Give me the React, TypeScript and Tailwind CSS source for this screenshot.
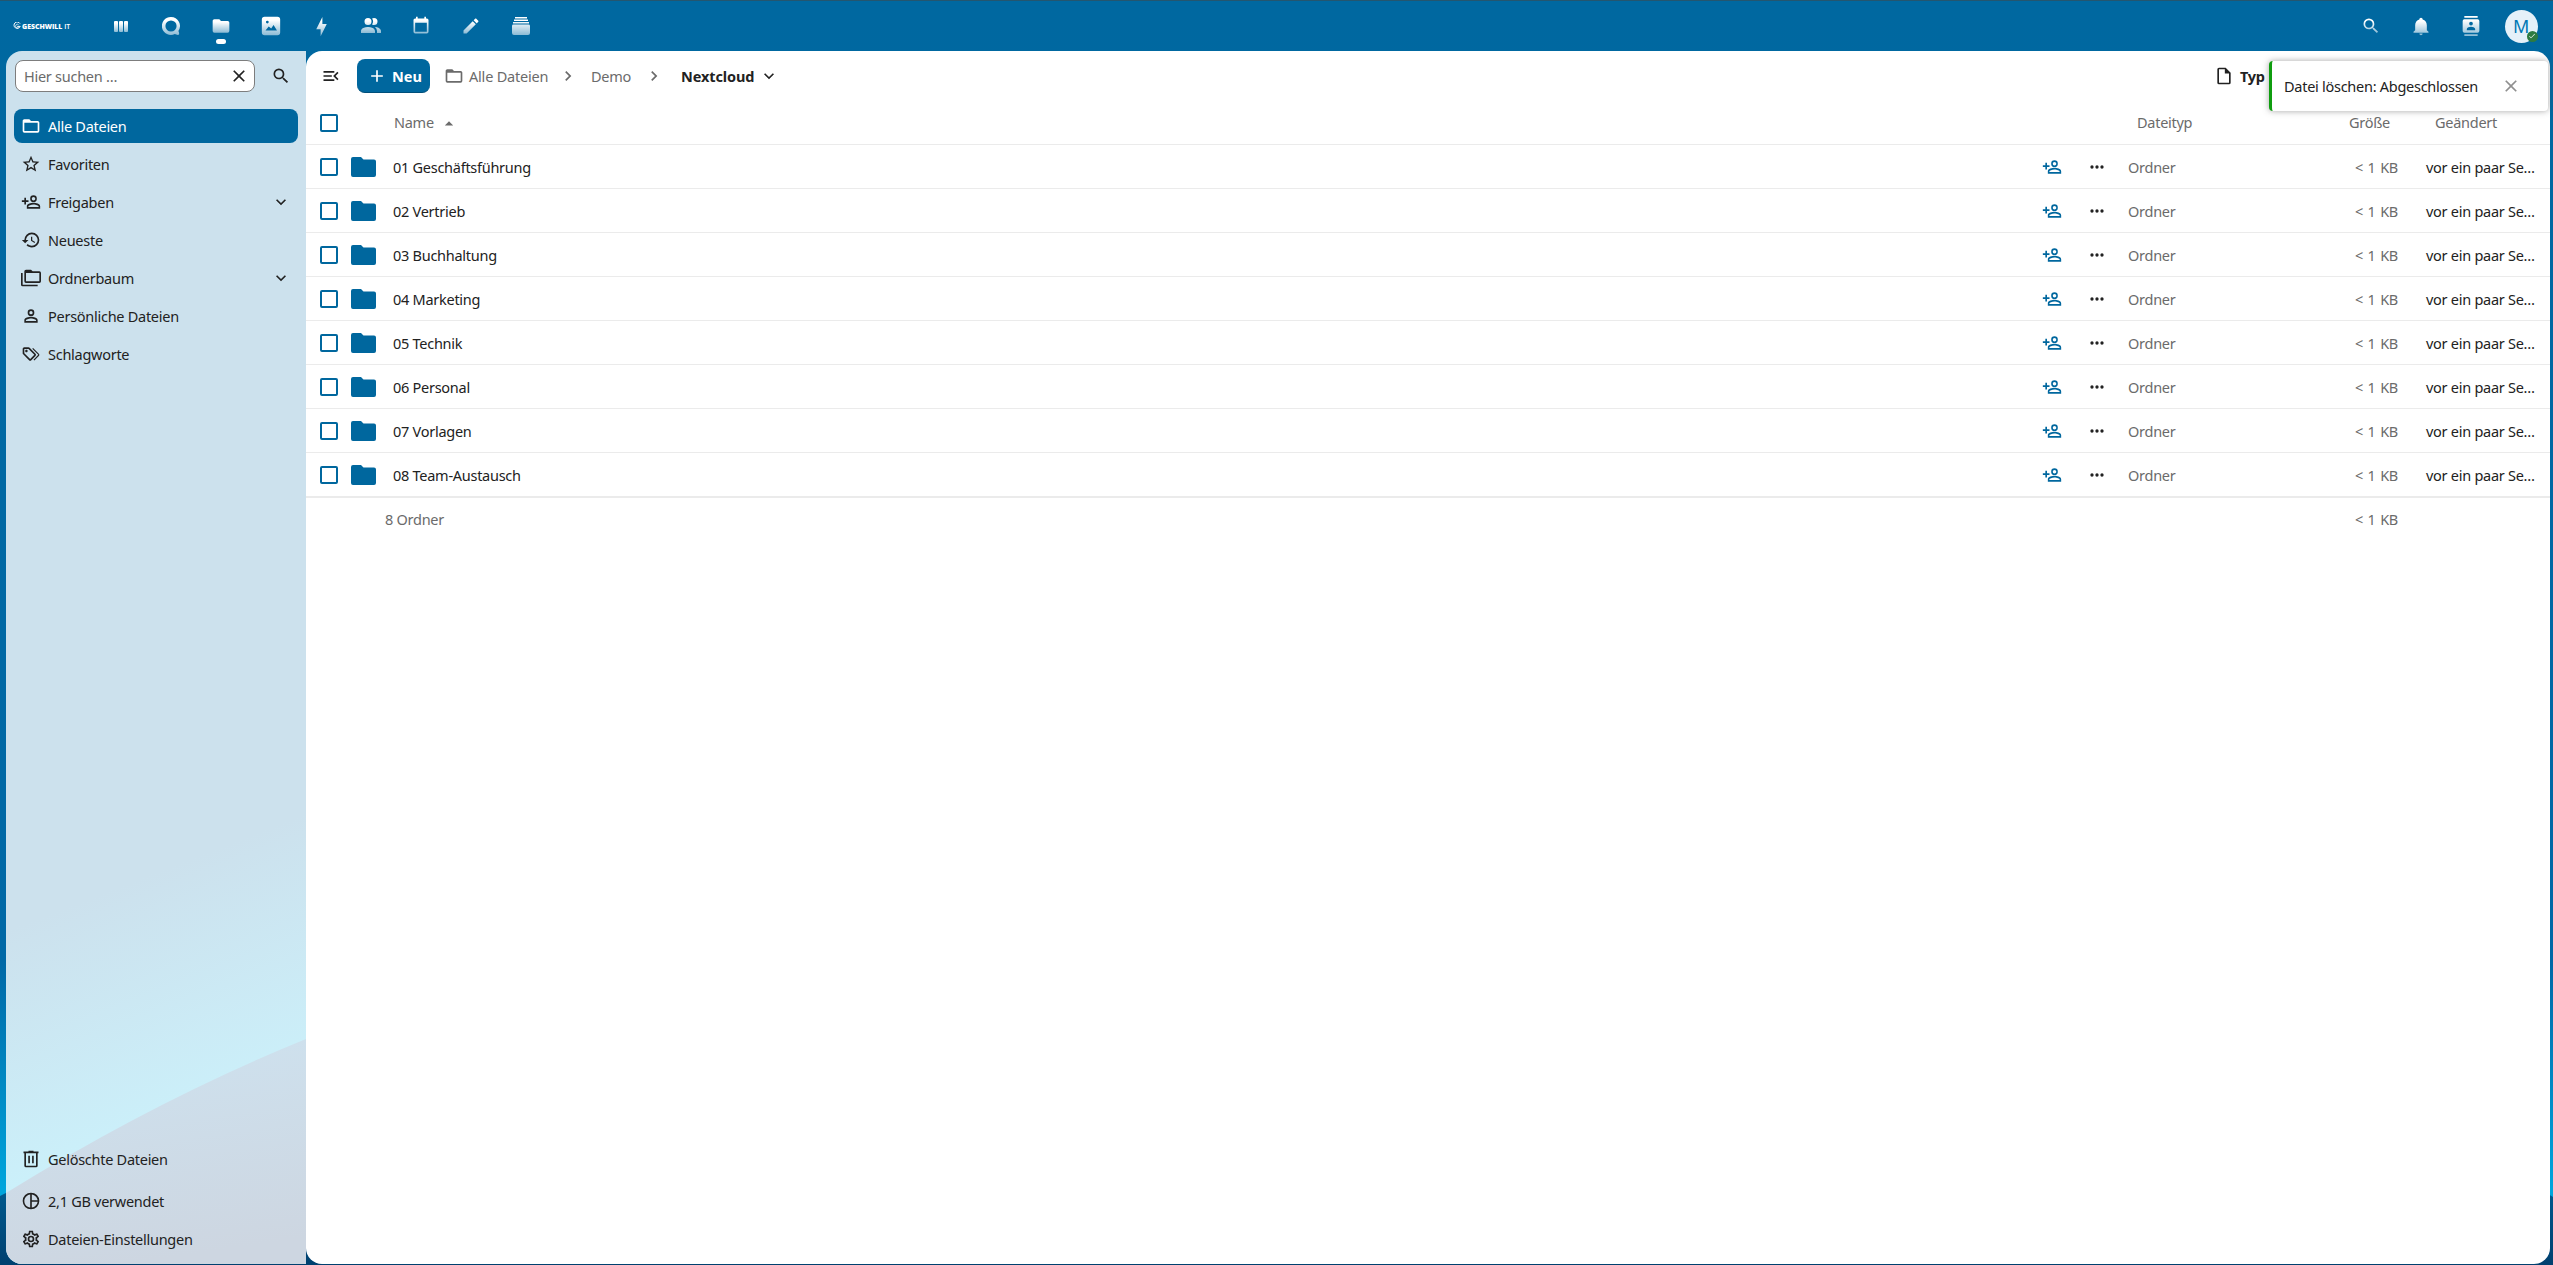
import React from "react";

const P = {
  folder: "M10,4H4C2.89,4 2,4.89 2,6V18A2,2 0 0,0 4,20H20A2,2 0 0,0 22,18V8C22,6.89 21.1,6 20,6H12L10,4Z",
  image: "M5,2H19A3,3 0 0,1 22,5V19A3,3 0 0,1 19,22H5A3,3 0 0,1 2,19V5A3,3 0 0,1 5,2M6,17H18.5L14.8,11L12.2,14.8L9.5,12.5L6,17M8,6.2A1.5,1.5 0 0,0 8,9.2A1.5,1.5 0 0,0 8,6.2Z",
  bolt: "M11 15H6L13 1V9H18L11 23V15Z",
  people: "M16 17V19H2V17S2 13 9 13 16 17 16 17M12.5 7.5A3.5 3.5 0 1 0 9 11A3.5 3.5 0 0 0 12.5 7.5M15.94 13A5.32 5.32 0 0 1 18 17V19H22V17S22 13.37 15.94 13M15 4A3.39 3.39 0 0 0 13.07 4.59A5 5 0 0 1 13.07 10.41A3.39 3.39 0 0 0 15 11A3.5 3.5 0 0 0 15 4Z",
  calendar: "M19,19H5V8H19M16,1V3H8V1H6V3H5C3.89,3 3,3.89 3,5V19A2,2 0 0,0 5,21H19A2,2 0 0,0 21,19V5C21,3.89 20.1,3 19,3H18V1",
  pencil: "M20.71,7.04C21.1,6.65 21.1,6 20.71,5.63L18.37,3.29C18,2.9 17.35,2.9 16.96,3.29L15.12,5.12L18.87,8.87M3,17.25V21H6.75L17.81,9.93L14.06,6.18L3,17.25Z",
  magnify: "M9.5,3A6.5,6.5 0 0,1 16,9.5C16,11.11 15.41,12.59 14.44,13.73L14.71,14H15.5L20.5,19L19,20.5L14,15.5V14.71L13.73,14.44C12.59,15.41 11.11,16 9.5,16A6.5,6.5 0 0,1 3,9.5A6.5,6.5 0 0,1 9.5,3M9.5,5C7,5 5,7 5,9.5C5,12 7,14 9.5,14C12,14 14,12 14,9.5C14,7 12,5 9.5,5Z",
  bell: "M21,19V20H3V19L5,17V11C5,7.9 7.03,5.17 10,4.29C10,4.19 10,4.1 10,4A2,2 0 0,1 12,2A2,2 0 0,1 14,4C14,4.1 14,4.19 14,4.29C16.97,5.17 19,7.9 19,11V17L21,19M14,21A2,2 0 0,1 12,23A2,2 0 0,1 10,21",
  contacts: "M20,0H4V2H20V0M4,24H20V22H4V24M20,4H4A2,2 0 0,0 2,6V18A2,2 0 0,0 4,20H20A2,2 0 0,0 22,18V6A2,2 0 0,0 20,4M12,6.75A2.25,2.25 0 0,1 14.25,9A2.25,2.25 0 0,1 12,11.25A2.25,2.25 0 0,1 9.75,9A2.25,2.25 0 0,1 12,6.75M17,17H7V15.5C7,13.83 10.33,13 12,13C13.67,13 17,13.83 17,15.5V17Z",
  close: "M19,6.41L17.59,5L12,10.59L6.41,5L5,6.41L10.59,12L5,17.59L6.41,19L12,13.41L17.59,19L19,17.59L13.41,12L19,6.41Z",
  menuOpen: "M21,15.61L19.59,17L14.58,12L19.59,7L21,8.39L17.44,12L21,15.61M3,6H16V8H3V6M3,13V11H13V13H3M3,18V16H16V18H3Z",
  plus: "M19,13H13V19H11V13H5V11H11V5H13V11H19V13Z",
  folderOutline: "M20,18H4V8H20M20,6H12L10,4H4C2.89,4 2,4.89 2,6V18A2,2 0 0,0 4,20H20A2,2 0 0,0 22,18V8C22,6.89 21.1,6 20,6Z",
  chevronRight: "M8.59,16.58L13.17,12L8.59,7.41L10,6L16,12L10,18L8.59,16.58Z",
  chevronDown: "M7.41,8.58L12,13.17L16.59,8.58L18,10L12,16L6,10L7.41,8.58Z",
  menuUp: "M7,15L12,10L17,15H7Z",
  star: "M12,15.39L8.24,17.66L9.23,13.38L5.91,10.5L10.29,10.13L12,6.09L13.71,10.13L18.09,10.5L14.77,13.38L15.76,17.66M22,9.24L14.81,8.63L12,2L9.19,8.63L2,9.24L7.45,13.97L5.82,21L12,17.27L18.18,21L16.54,13.97L22,9.24Z",
  accountPlus: "M15,4A4,4 0 0,0 11,8A4,4 0 0,0 15,12A4,4 0 0,0 19,8A4,4 0 0,0 15,4M15,5.9C16.16,5.9 17.1,6.84 17.1,8C17.1,9.16 16.16,10.1 15,10.1A2.1,2.1 0 0,1 12.9,8A2.1,2.1 0 0,1 15,5.9M4,7V10H1V12H4V15H6V12H9V10H6V7H4M15,13C12.33,13 7,14.33 7,17V20H23V17C23,14.33 17.67,13 15,13M15,14.9C17.97,14.9 21.1,16.36 21.1,17V18.1H8.9V17C8.9,16.36 12,14.9 15,14.9Z",
  history: "M13.5,8H12V13L16.28,15.54L17,14.33L13.5,12.25V8M13,3A9,9 0 0,0 4,12H1L4.96,16.03L9,12H6A7,7 0 0,1 13,5A7,7 0 0,1 20,12A7,7 0 0,1 13,19C11.07,19 9.32,18.21 8.06,16.94L6.64,18.36C8.27,20 10.5,21 13,21A9,9 0 0,0 22,12A9,9 0 0,0 13,3",
  folders: "M22,4H14L12,2H6A2,2 0 0,0 4,4V16A2,2 0 0,0 6,18H22A2,2 0 0,0 24,16V6A2,2 0 0,0 22,4M22,16H6V6H22M2,6H0V20A2,2 0 0,0 2,22H20V20H2V6Z",
  account: "M12,4A4,4 0 0,1 16,8A4,4 0 0,1 12,12A4,4 0 0,1 8,8A4,4 0 0,1 12,4M12,6A2,2 0 0,0 10,8A2,2 0 0,0 12,10A2,2 0 0,0 14,8A2,2 0 0,0 12,6M12,13C14.67,13 20,14.33 20,17V20H4V17C4,14.33 9.33,13 12,13M12,14.9C9.03,14.9 5.9,16.36 5.9,17V18.1H18.1V17C18.1,16.36 14.97,14.9 12,14.9Z",
  tags: "M6.5 10C7.3 10 8 9.3 8 8.5S7.3 7 6.5 7 5 7.7 5 8.5 5.7 10 6.5 10M9 6L16 13L11 18L4 11V6H9M9 4H4C2.9 4 2 4.9 2 6V11C2 11.6 2.2 12.1 2.6 12.4L9.6 19.4C9.9 19.8 10.4 20 11 20S12.1 19.8 12.4 19.4L17.4 14.4C17.8 14 18 13.5 18 13C18 12.4 17.8 11.9 17.4 11.6L10.4 4.6C10.1 4.2 9.6 4 9 4M13.5 5.7L14.5 4.7L21.4 11.6C21.8 12 22 12.5 22 13S21.8 14.1 21.4 14.4L16 19.8L15 18.8L20.7 13L13.5 5.7Z",
  trash: "M9,2V3H3V5H4V20A2,2 0 0,0 6,22H18A2,2 0 0,0 20,20V5H21V3H15V2H9M6,5H18V20H6V5M8.7,8V17H10.7V8H8.7M13.3,8V17H15.3V8H13.3Z",
  pie: "M12,2A10,10 0 0,0 2,12A10,10 0 0,0 12,22A10,10 0 0,0 22,12A10,10 0 0,0 12,2M13,4.07C16.61,4.53 19.5,7.39 19.93,11H13V4.07M4,12C4,8 7,4.57 11,4.07V19.93C7,19.43 4,16 4,12M13,19.93V13H19.93C19.5,16.61 16.64,19.47 13,19.93Z",
  cog: "M12,8A4,4 0 0,1 16,12A4,4 0 0,1 12,16A4,4 0 0,1 8,12A4,4 0 0,1 12,8M12,10A2,2 0 0,0 10,12A2,2 0 0,0 12,14A2,2 0 0,0 14,12A2,2 0 0,0 12,10M10,22C9.75,22 9.54,21.82 9.5,21.58L9.13,18.93C8.5,18.68 7.96,18.34 7.44,17.94L4.95,18.95C4.73,19.03 4.46,18.95 4.34,18.73L2.34,15.27C2.21,15.05 2.27,14.78 2.46,14.63L4.57,12.97L4.5,12L4.57,11L2.46,9.37C2.27,9.22 2.21,8.95 2.34,8.73L4.34,5.27C4.46,5.05 4.73,4.96 4.95,5.05L7.44,6.05C7.96,5.66 8.5,5.32 9.13,5.07L9.5,2.42C9.54,2.18 9.75,2 10,2H14C14.25,2 14.46,2.18 14.5,2.42L14.87,5.07C15.5,5.32 16.04,5.66 16.56,6.05L19.05,5.05C19.27,4.96 19.54,5.05 19.66,5.27L21.66,8.73C21.79,8.95 21.73,9.22 21.54,9.37L19.43,11L19.5,12L19.43,13L21.54,14.63C21.73,14.78 21.79,15.05 21.66,15.27L19.66,18.73C19.54,18.95 19.27,19.04 19.05,18.95L16.56,17.95C16.04,18.34 15.5,18.68 14.87,18.93L14.5,21.58C14.46,21.82 14.25,22 14,22H10M11.25,4L10.88,6.61C9.68,6.86 8.62,7.5 7.85,8.39L5.44,7.35L4.69,8.65L6.8,10.2C6.4,11.37 6.4,12.64 6.8,13.8L4.68,15.36L5.43,16.66L7.86,15.62C8.63,16.5 9.68,17.14 10.87,17.38L11.24,20H12.76L13.13,17.39C14.32,17.14 15.37,16.5 16.14,15.62L18.57,16.66L19.32,15.36L17.2,13.81C17.6,12.64 17.6,11.37 17.2,10.2L19.31,8.65L18.56,7.35L16.15,8.39C15.38,7.5 14.32,6.86 13.12,6.62L12.75,4H11.25Z",
  dots: "M16,12A2,2 0 0,1 18,10A2,2 0 0,1 20,12A2,2 0 0,1 18,14A2,2 0 0,1 16,12M10,12A2,2 0 0,1 12,10A2,2 0 0,1 14,12A2,2 0 0,1 12,14A2,2 0 0,1 10,12M4,12A2,2 0 0,1 6,10A2,2 0 0,1 8,12A2,2 0 0,1 6,14A2,2 0 0,1 4,12Z",
  file: "M14,2H6A2,2 0 0,0 4,4V20A2,2 0 0,0 6,22H18A2,2 0 0,0 20,20V8L14,2M18,20H6V4H13V9H18V20Z",
  check: "M21,7L9,19L3.5,13.5L4.91,12.09L9,16.17L19.59,5.59L21,7Z",
};

function Icon({ d, size = 20, className = "", fill = "currentColor" }: { d: string; size?: number; className?: string; fill?: string }) {
  return (
    <svg width={size} height={size} viewBox="0 0 24 24" className={"shrink-0 " + className}>
      <path d={d} fill={fill} fillRule="evenodd" />
    </svg>
  );
}

const fade = "url(#fade)";

function AppSlot({ children, active = false }: { children: React.ReactNode; active?: boolean }) {
  return (
    <div className="relative flex h-[50px] w-[50px] items-center justify-center">
      {children}
      {active && <span className="absolute bottom-[7px] h-[5px] w-[10px] rounded-full bg-white" />}
    </div>
  );
}

function Header() {
  return (
    <header className="flex h-[51px] items-center justify-between border-t border-[#24566f] pr-[7px]">
      <div className="flex items-center">
        <div className="flex w-[96px] items-center gap-px pl-[13px] text-white">
          <svg width="8" height="8" viewBox="0 0 8 8" fill="none" stroke="currentColor">
            <path d="M7 1.6A3.2 3.2 0 1 0 7.2 4.4H4.2" />
            <path d="M5.6 2.8A1.8 1.8 0 1 0 5.6 5.4" strokeWidth=".7" />
          </svg>
          <span className="whitespace-nowrap font-['Open_Sans',sans-serif] text-[7px] font-extrabold leading-none tracking-[-0.05px]">GESCHWILL <span className="font-semibold">IT</span></span>
        </div>
        <AppSlot>
          <svg width="14" height="11" viewBox="0 0 14 11" fill={fade}>
            <path d="M1 0H3.2Q4 0 4 1V10Q4 11 3.2 11H1Q0 11 0 10V1Q0 0 1 0M6 0H8.2Q9 0 9 1V10Q9 11 8.2 11H6Q5 11 5 10V1Q5 0 6 0M11 0H13.2Q14 0 14 1V10Q14 11 13.2 11H11Q10 11 10 10V1Q10 0 11 0" />
          </svg>
        </AppSlot>
        <AppSlot>
          <svg width="18" height="18" viewBox="0 0 18 18">
            <path fillRule="evenodd" fill={fade} d="M9 0A9 9 0 1 0 12.8 17.1C14 17.7 15.6 18.2 16.8 17.8C17.6 17 16.8 15 16.4 14A9 9 0 0 0 9 0M9 3.4A5.6 5.6 0 1 1 9 14.6A5.6 5.6 0 0 1 9 3.4" />
          </svg>
        </AppSlot>
        <AppSlot active><Icon d={P.folder} fill={fade} /></AppSlot>
        <AppSlot><Icon d={P.image} fill={fade} size={22} /></AppSlot>
        <AppSlot><Icon d={P.bolt} fill={fade} size={21} /></AppSlot>
        <AppSlot><Icon d={P.people} fill={fade} size={24} /></AppSlot>
        <AppSlot><Icon d={P.calendar} fill={fade} /></AppSlot>
        <AppSlot><Icon d={P.pencil} fill={fade} /></AppSlot>
        <AppSlot>
          <svg width="18" height="18" viewBox="0 0 18 18" fill={fade}>
            <path d="M3 0H15V1.4H3V0M2 2.4H16V4H2V2.4M1 5H17V6.6H1V5M1.5 7.6H16.5Q18 7.6 18 9V16Q18 18 16 18H2Q0 18 0 16V9Q0 7.6 1.5 7.6" />
          </svg>
        </AppSlot>
      </div>
      <div className="flex items-center">
        <AppSlot><Icon d={P.magnify} fill={fade} /></AppSlot>
        <AppSlot><Icon d={P.bell} fill={fade} /></AppSlot>
        <AppSlot><Icon d={P.contacts} fill={fade} /></AppSlot>
        <AppSlot>
          <div className="relative flex h-[33px] w-[33px] items-center justify-center rounded-full bg-[#e5f1f9] text-[18px] text-[#0078b5]">
            M
            <span className="absolute bottom-px right-0 flex h-[11px] w-[11px] items-center justify-center rounded-full bg-[#2d7b41] text-white">
              <Icon d={P.check} size={8} />
            </span>
          </div>
        </AppSlot>
      </div>
    </header>
  );
}

function NavItem({ icon, label, active = false, expandable = false }: { icon: string; label: string; active?: boolean; expandable?: boolean }) {
  return (
    <li className={"flex h-[34px] items-center rounded-lg pr-[7px] " + (active ? "bg-[#00679e] text-white" : "text-[#222]")}>
      <span className="flex w-[34px] justify-center"><Icon d={icon} /></span>
      <span className="flex-1">{label}</span>
      {expandable && <Icon d={P.chevronDown} />}
    </li>
  );
}

function Sidebar() {
  return (
    <nav className="relative flex w-[300px] shrink-0 flex-col overflow-hidden rounded-l-[16px]">
      <svg className="absolute inset-0" width="300" height="1213" viewBox="0 0 300 1213">
        <rect width="300" height="1213" fill="url(#sideTop)" />
        <path d="M0 1142Q150 1049 300 988V1213H0Z" fill="url(#sideBottom)" />
      </svg>
      <div className="relative flex items-center pl-[9px] pt-[9px]">
        <div className="flex h-[32px] w-[240px] items-center justify-between rounded-lg border border-[#7d7d7d] bg-white pl-[8px] pr-[5px] text-[#6b6b6b]">
          Hier suchen …
          <Icon d={P.close} className="text-[#222]" />
        </div>
        <Icon d={P.magnify} className="ml-[16px] text-[#222]" />
      </div>
      <ul className="relative mt-[17px] flex flex-col gap-1 pl-2 pr-[8px]">
        <NavItem icon={P.folderOutline} label="Alle Dateien" active />
        <NavItem icon={P.star} label="Favoriten" />
        <NavItem icon={P.accountPlus} label="Freigaben" expandable />
        <NavItem icon={P.history} label="Neueste" />
        <NavItem icon={P.folders} label="Ordnerbaum" expandable />
        <NavItem icon={P.account} label="Persönliche Dateien" />
        <NavItem icon={P.tags} label="Schlagworte" />
      </ul>
      <ul className="relative mt-auto flex flex-col gap-1 pb-2 pl-2 pr-[8px]">
        <NavItem icon={P.trash} label="Gelöschte Dateien" />
        <li className="h-0" />
        <NavItem icon={P.pie} label="2,1 GB verwendet" />
        <NavItem icon={P.cog} label="Dateien-Einstellungen" />
      </ul>
    </nav>
  );
}

const rows = ["01 Geschäftsführung", "02 Vertrieb", "03 Buchhaltung", "04 Marketing", "05 Technik", "06 Personal", "07 Vorlagen", "08 Team-Austausch"];

function Checkbox() {
  return <span className="block h-[18px] w-[18px] shrink-0 rounded-[2px] border-2 border-[#00679e] bg-white" />;
}

function Files() {
  return (
    <main className="relative mr-[3px] flex flex-1 flex-col overflow-hidden rounded-[16px] bg-white text-[#6b6b6b]">
      <div className="flex h-[50px] items-center whitespace-nowrap pl-[15px]">
        <Icon d={P.menuOpen} className="text-[#222]" />
        <button className="ml-[16px] flex h-[34px] w-[73px] items-center rounded-lg border-b border-[#004f7a] bg-[#00679e] pl-[10px] font-bold tracking-normal text-white">
          <Icon d={P.plus} />
          <span className="ml-[5px]">Neu</span>
        </button>
        <Icon d={P.folderOutline} className="ml-[14px]" />
        <span className="ml-[5px] w-[80px] tracking-[-0.2px]">Alle Dateien</span>
        <Icon d={P.chevronRight} className="ml-[9px]" />
        <span className="ml-[13px] w-[41px]">Demo</span>
        <Icon d={P.chevronRight} className="ml-[12px]" />
        <span className="ml-[17px] w-[73px] font-bold tracking-[-0.1px] text-[#222]">Nextcloud</span>
        <Icon d={P.chevronDown} className="ml-[5px] text-[#222]" />
        <Icon d={P.file} className="ml-auto text-[#222]" />
        <span className="ml-[6px] w-[310px] font-bold text-[#222]">Typ</span>
      </div>
      <div className="flex h-[44px] items-center border-b border-[#ebebeb] pl-[14px] pt-px">
        <Checkbox />
        <span className="ml-[56px] pb-0.5">Name</span>
        <Icon d={P.menuUp} className="ml-[5px]" />
        <span className="ml-auto w-[212px] pb-0.5">Dateityp</span>
        <span className="w-[86px] pb-0.5">Größe</span>
        <span className="w-[115px] pb-0.5">Geändert</span>
      </div>
      {rows.map((name, i) => (
        <div key={name} className={"flex items-center border-[#ebebeb] pl-[14px] pt-px " + (i === rows.length - 1 ? "h-[45px] border-b-2" : "h-[44px] border-b")}>
          <Checkbox />
          <svg width="25" height="20" viewBox="0 0 25 20" className="ml-[13px] shrink-0">
            <path fill="#00679e" d="M2 0H10L12.5 2.5H23Q25 2.5 25 4.5V18Q25 20 23 20H2Q0 20 0 18V2Q0 0 2 0" />
          </svg>
          <span className="ml-[17px] text-[#222]">{name}</span>
          <Icon d={P.accountPlus} className="ml-auto text-[#00679e]" />
          <Icon d={P.dots} className="ml-[25px] text-[#222]" />
          <span className="ml-[21px] w-[200px]">Ordner</span>
          <span className="w-[70px] text-right [word-spacing:1px]">&lt; 1 KB</span>
          <span className="ml-[28px] w-[124px] text-[#222]">vor ein paar Se…</span>
        </div>
      ))}
      <div className="flex h-[41px] items-center justify-between pl-[79px] pr-[152px]">
        <span>8 Ordner</span>
        <span className="[word-spacing:1px]">&lt; 1 KB</span>
      </div>
    </main>
  );
}

export default function App() {
  return (
    <div className="relative flex h-[1265px] w-[2553px] flex-col overflow-hidden bg-[#00679e] font-['Noto_Sans',sans-serif] text-[14.5px] leading-5 tracking-[-0.27px]">
      <svg className="absolute inset-0" width="2553" height="1265">
        <defs>
          <linearGradient id="fade" x1="0" y1="0" x2="0" y2="1">
            <stop offset="0.2" stopColor="#fff" />
            <stop offset="1" stopColor="#8cbbd5" />
          </linearGradient>
          <linearGradient id="page" x1="0" y1="0" x2="0" y2="1">
            <stop offset="0" stopColor="#0068a0" />
            <stop offset="0.76" stopColor="#0068a6" />
            <stop offset="0.94" stopColor="#00a5dc" />
          </linearGradient>
          <linearGradient id="deep" gradientUnits="userSpaceOnUse" x1="0" y1="1190" x2="0" y2="1265">
            <stop offset="0" stopColor="#005a8e" />
            <stop offset="1" stopColor="#00406f" />
          </linearGradient>
          <linearGradient id="sideTop" gradientUnits="userSpaceOnUse" x1="0" y1="880" x2="88" y2="1105">
            <stop offset="0" stopColor="#cce1ed" />
            <stop offset="1" stopColor="#cbf0fa" />
          </linearGradient>
          <linearGradient id="sideBottom" x1="0.2" y1="0" x2="0.4" y2="1">
            <stop offset="0" stopColor="#cee2ef" />
            <stop offset="1" stopColor="#cdd6e1" />
          </linearGradient>
        </defs>
        <rect width="2553" height="1265" fill="url(#page)" />
        <path d="M0 1196L306 1039H2300L2553 1197V1265H0Z" fill="url(#deep)" />
      </svg>
      <div className="relative"><Header /></div>
      <div className="relative flex h-[1213px] pl-[6px]">
        <Sidebar />
        <Files />
      </div>
      <div className="absolute left-[2269px] top-[61px] flex h-[50px] w-[279px] items-center rounded border-l-[3px] border-[#0f9d0f] bg-white pl-[12px] text-[#222] shadow-[0_0_6px_rgba(77,77,77,0.5)]">
        <span className="w-[217px]">Datei löschen: Abgeschlossen</span>
        <Icon d={P.close} className="text-[#8f8f8f]" />
      </div>
    </div>
  );
}
